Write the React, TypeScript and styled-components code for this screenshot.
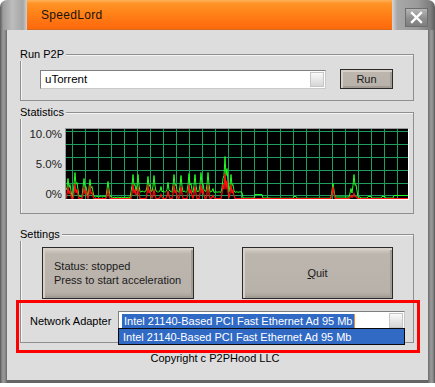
import React from 'react';
import styled, { createGlobalStyle } from 'styled-components';

const GlobalStyle = createGlobalStyle`
  html, body {
    margin: 0;
    padding: 0;
    background: #ffffff;
  }
  body {
    font-family: "Liberation Sans", Arial, sans-serif;
    font-size: 11px;
    color: #000;
  }
`;

const Window = styled.div`
  position: relative;
  width: 435px;
  height: 383px;
  display: flex;
  flex-direction: column;
`;

const TitleBar = styled.div`
  height: 30px;
  display: flex;
  flex-shrink: 0;
`;

const TitleCap = styled.div<{ $side: 'left' | 'right' }>`
  width: ${(p) => (p.$side === 'left' ? 27 : 43)}px;
  border-radius: ${(p) => (p.$side === 'left' ? '7px 0 0 0' : '0 7px 0 0')};
  background: ${(p) =>
    p.$side === 'left'
      ? 'linear-gradient(to right, #5c5c5c 0, #9c9c9c 3px, #bdbdbd 45%, #a6a6a6 85%, #cfcfcf 100%)'
      : 'linear-gradient(to right, #d6d6d6 0, #a8a8a8 12%, #9a9a9a 60%, #7c7c7c 90%, #5c5c5c 100%)'};
  display: flex;
  align-items: flex-start;
  padding-top: 8px;
  box-sizing: border-box;
  padding-left: ${(p) => (p.$side === 'right' ? 13 : 0)}px;
`;

const TitleText = styled.div`
  flex: 1;
  background: linear-gradient(to bottom, #ffb25a 0, #ff9326 12%, #ff8318 45%, #ff6e10 85%, #ff6a0a 100%);
  border-bottom: 1px solid #d86a20;
  display: flex;
  align-items: center;
  padding-left: 14px;
  font-size: 12px;
  color: #1c1208;
  letter-spacing: 0.3px;
`;

const CloseButton = styled.div`
  width: 23px;
  height: 19px;
  box-sizing: border-box;
  border: 1px solid #6e6e6e;
  background: linear-gradient(to bottom, #b6b6b6, #8e8e8e 55%, #7e7e7e);
  display: flex;
  align-items: center;
  justify-content: center;
`;

const Frame = styled.div`
  flex: 1;
  display: flex;
`;

const Edge = styled.div<{ $side: 'left' | 'right' }>`
  width: 7px;
  background: ${(p) =>
    p.$side === 'left'
      ? 'linear-gradient(to right, #555 0, #8c8c8c 2px, #9a9a9a 4px, #6c6c6c 7px)'
      : 'linear-gradient(to right, #6c6c6c 0, #9a9a9a 3px, #8c8c8c 5px, #555 7px)'};
`;

const Body = styled.div`
  flex: 1;
  background: #dddddd;
  border-bottom: 3px solid #666;
  padding: 24px 14px 0 13px;
  display: flex;
  flex-direction: column;
`;

const Group = styled.div<{ $h: number; $mt?: number }>`
  position: relative;
  height: ${(p) => p.$h}px;
  margin-top: ${(p) => p.$mt ?? 0}px;
  box-sizing: border-box;
  border: 1px solid #8f8f8f;
  box-shadow: inset 1px 1px 0 #f4f4f4;
`;

const Legend = styled.span`
  position: absolute;
  top: -7px;
  left: -1px;
  line-height: 13px;
  background: #dddddd;
  padding-right: 2px;
`;

const RunRow = styled.div`
  display: flex;
  align-items: center;
  padding: 14px 0 0 19px;
  gap: 14px;
`;

const TextBox = styled.div<{ $w: number }>`
  width: ${(p) => p.$w}px;
  height: 19px;
  box-sizing: border-box;
  border: 1px solid #7f7f7f;
  border-bottom-color: #c8c8c8;
  border-right-color: #c8c8c8;
  background: #fff;
  display: flex;
  align-items: center;
  padding: 0 1px 0 3px;
  font-size: 11.5px;
  white-space: nowrap;
`;

const BoxText = styled.span`
  flex: 1;
  padding-left: 1px;
`;

const DropArrow = styled.div`
  width: 14px;
  height: 15px;
  margin-left: auto;
  box-sizing: border-box;
  border: 1px solid #c6c6c6;
  background: linear-gradient(to bottom, #fafafa, #e4e4e4 60%, #d6d6d6);
`;

const PushButton = styled.div<{ $w: number; $h: number; $left?: boolean }>`
  width: ${(p) => p.$w}px;
  height: ${(p) => p.$h}px;
  box-sizing: border-box;
  border: 1px solid #2c2a28;
  background: linear-gradient(to bottom, #d9d2cb 0, #bdb6af 12%, #b9b2ab 88%, #a49d96 100%);
  box-shadow: inset 2px 2px 0 #d7d0c9, inset -2px -2px 0 #a39c95;
  display: flex;
  flex-direction: column;
  justify-content: center;
  align-items: ${(p) => (p.$left ? 'flex-start' : 'center')};
  padding-left: ${(p) => (p.$left ? 11 : 0)}px;
  font-size: 11px;
  line-height: 14px;
  white-space: nowrap;
  color: #1a1a1a;
`;

const StatsRow = styled.div`
  display: flex;
  padding: 15px 0 0 1px;
`;

const AxisLabels = styled.div`
  width: 40px;
  height: 72px;
  margin-right: 3px;
  display: flex;
  flex-direction: column;
  justify-content: space-between;
  align-items: flex-end;
  font-size: 11.5px;
  line-height: 12px;
  color: #222;
`;

const ChartBox = styled.div`
  width: 344px;
  height: 72px;
  box-sizing: border-box;
  border: 1px solid;
  border-color: #9a9a9a #ffffff #ffffff #9a9a9a;
  background: #000;
  display: flex;
`;

const ButtonRow = styled.div`
  display: flex;
  justify-content: space-between;
  padding: 12px 20px 0 21px;
`;

const AdapterRow = styled.div`
  position: relative;
  display: flex;
  align-items: center;
  padding: 12px 8px 0 9px;
  gap: 6px;
`;

const AdapterLabel = styled.span`
  flex: 1;
  font-size: 11px;
  white-space: nowrap;
`;

const Highlight = styled.span`
  background: #316ac5;
  color: #fff;
  padding: 0 1px 0 2px;
  font-size: 11px;
  line-height: 14px;
  border-right: 1px solid #e09040;
`;

const DropList = styled.div`
  position: absolute;
  top: 29px;
  right: 8px;
  width: 287px;
  height: 17px;
  box-sizing: border-box;
  border: 1px solid #0a0a0a;
  background: #316ac5;
  color: #fff;
  font-size: 11px;
  padding-left: 4px;
  white-space: nowrap;
  display: flex;
  align-items: center;
`;

const Copyright = styled.div`
  text-align: center;
  margin-top: 9px;
  font-size: 11px;
  padding-right: 4px;
`;

const Annotation = styled.div`
  position: absolute;
  left: 16px;
  top: 300px;
  width: 404px;
  height: 53px;
  box-sizing: border-box;
  border: 3px solid #ff0000;
  pointer-events: none;
`;

const W = 342;
const H = 70;

// page-x, green height, red height
const spikes: [number, number, number][] = [
  [67, 20, 12], [69, 14, 8], [74, 26, 15], [76, 16, 9], [83, 20, 12], [85, 12, 8],
  [89, 19, 13], [91, 12, 6], [107, 17, 10], [132, 24, 14], [134, 14, 9], [137, 24, 12],
  [147, 22, 14], [149, 14, 8], [153, 23, 10], [160, 12, 4], [167, 16, 8], [173, 24, 14],
  [175, 14, 8], [180, 23, 12], [188, 25, 14], [190, 15, 8], [194, 24, 12], [200, 26, 14],
  [202, 15, 9], [207, 26, 14], [212, 10, 3], [222, 20, 14], [224, 42, 25], [226, 30, 18],
  [230, 24, 14], [232, 14, 8], [332, 15, 12], [350, 10, 3], [353, 24, 5], [355, 14, 2],
];

function base(px: number) {
  const n = Math.abs(Math.sin(px * 0.9)) * 1.5;
  if (px < 71) return 7 + n;
  if (px < 112) return 1 + n;
  if (px < 130) return 0.5 + n * 0.6;
  if (px < 213) return 6 + n;
  if (px < 242) return 6 + n * 0.5;
  if (px < 270) return px > 253 && px < 262 ? 4 : 0.5;
  if (px < 330) return px > 292 && px < 296 ? 2 : 0.3;
  if (px < 360) return 1.5;
  if ((px > 366 && px < 371) || (px > 380 && px < 385)) return 2;
  if (px > 392) return 3;
  return 0.5;
}

function series(red: boolean) {
  const pts: string[] = [];
  for (let x = 0; x <= W; x++) {
    const px = x + 65;
    let v = red ? 0 : base(px);
    for (const [sx, g, r] of spikes) {
      const h = red ? r : g;
      const half = red ? 1.6 : 2.2;
      const k = 1 - Math.abs(px - sx) / half;
      if (k > 0) v = Math.max(v, h * k);
    }
    pts.push(`${x},${(H - 0.5 - v).toFixed(1)}`);
  }
  return pts.join(' ');
}

function Chart() {
  const vLines = [];
  for (let x = 6; x < W; x += 13) vLines.push(x);
  const hLines = [2, 15, 28, 41, 54, 66];
  return (
    <svg width={W} height={H} viewBox={`0 0 ${W} ${H}`}>
      {vLines.map((x) => (
        <line key={'v' + x} x1={x + 0.5} y1={0} x2={x + 0.5} y2={H} stroke="#1f9d5c" strokeWidth={1} />
      ))}
      {hLines.map((y) => (
        <line key={'h' + y} x1={0} y1={y + 0.5} x2={W} y2={y + 0.5} stroke="#1f9d5c" strokeWidth={1} />
      ))}
      <polyline points={series(false)} fill="none" stroke="#22ff22" strokeWidth={1} />
      <polyline points={series(true)} fill="none" stroke="#ff1010" strokeWidth={1.2} />
    </svg>
  );
}

export default function App() {
  return (
    <>
      <GlobalStyle />
      <Window>
        <TitleBar>
          <TitleCap $side="left" />
          <TitleText>SpeedLord</TitleText>
          <TitleCap $side="right">
            <CloseButton>
              <svg width="13" height="13" viewBox="0 0 13 13">
                <path d="M2 2 L11 11 M11 2 L2 11" stroke="#ffffff" strokeWidth="2.4" strokeLinecap="square" />
              </svg>
            </CloseButton>
          </TitleCap>
        </TitleBar>
        <Frame>
          <Edge $side="left" />
          <Body>
            <Group $h={47}>
              <Legend>Run P2P</Legend>
              <RunRow>
                <TextBox $w={286}>
                  <BoxText>uTorrent</BoxText>
                  <DropArrow />
                </TextBox>
                <PushButton $w={53} $h={20}>Run</PushButton>
              </RunRow>
            </Group>
            <Group $h={102} $mt={11}>
              <Legend>Statistics</Legend>
              <StatsRow>
                <AxisLabels>
                  <span>10.0%</span>
                  <span>5.0%</span>
                  <span>0%</span>
                </AxisLabels>
                <ChartBox>
                  <Chart />
                </ChartBox>
              </StatsRow>
            </Group>
            <Group $h={109} $mt={20}>
              <Legend>Settings</Legend>
              <ButtonRow>
                <PushButton $w={152} $h={52} $left>
                  <span>Status: stopped</span>
                  <span>Press to start acceleration</span>
                </PushButton>
                <PushButton $w={151} $h={52}>
                  <span>
                    <u>Q</u>uit
                  </span>
                </PushButton>
              </ButtonRow>
              <AdapterRow>
                <AdapterLabel>Network Adapter</AdapterLabel>
                <TextBox $w={287}>
                  <Highlight>Intel 21140-Based PCI Fast Ethernet Ad 95 Mb</Highlight>
                  <DropArrow />
                </TextBox>
                <DropList>Intel 21140-Based PCI Fast Ethernet Ad 95 Mb</DropList>
              </AdapterRow>
            </Group>
            <Copyright>Copyright c P2PHood LLC</Copyright>
          </Body>
          <Edge $side="right" />
        </Frame>
        <Annotation />
      </Window>
    </>
  );
}
